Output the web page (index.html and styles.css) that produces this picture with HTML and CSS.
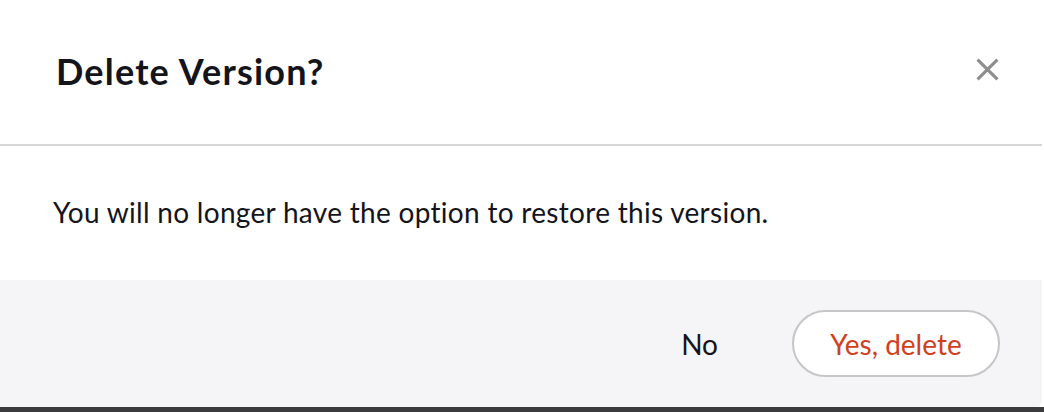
FILE: index.html
```html
<!DOCTYPE html>
<html lang="en">
<head>
    <meta charset="UTF-8">
    <meta name="viewport" content="width=device-width, initial-scale=1.0">
    <title>Delete Version</title>
    <link rel="stylesheet" href="styles.css">
</head>
<body>

<div class="page">
    <div class="modal">
        <header class="modal-header">
            <h1>Delete Version?</h1>
            <button class="close-btn" aria-label="Close">
                <svg width="22" height="22" viewBox="0 0 22 22">
                    <path d="M1.5 1.5 L20.5 20.5 M20.5 1.5 L1.5 20.5" stroke="#8e8e8e" stroke-width="3" fill="none"/>
                </svg>
            </button>
        </header>

        <div class="modal-body">
            <p>You will no longer have the option to restore this version.</p>
        </div>

        <footer class="modal-footer">
            <button class="btn-no">No</button>
            <button class="btn-delete">Yes, delete</button>
        </footer>
    </div>
    <div class="backdrop"></div>
</div>

</body>
</html>
```

FILE: styles.css
```css
body {
    font-family: Lato, "Noto Sans", sans-serif;
    margin: 0;
    padding: 0;
    background-color: #fff;
    color: #14141b;
}
.page {
    display: flex;
    flex-direction: column;
    height: 412px;
}
.modal {
    width: 1042px;
    background-color: #fff;
    border-bottom-right-radius: 6px;
    overflow: hidden;
}
.modal-header {
    height: 144px;
    border-bottom: 2px solid #d6d6d6;
    display: flex;
    align-items: center;
    justify-content: space-between;
    padding: 0 43px 0 56px;
}
.modal-header h1 {
    margin: 0 0 2px 0;
    font-size: 36px;
    font-weight: 700;
    letter-spacing: 1.2px;
}
.close-btn {
    background: none;
    border: none;
    padding: 0;
    width: 23px;
    height: 23px;
    margin-bottom: 6px;
    cursor: pointer;
}
.close-btn svg {
    display: block;
    width: 23px;
    height: 23px;
}
.modal-body {
    height: 134px;
    display: flex;
    align-items: center;
    padding-left: 53px;
}
.modal-body p {
    margin: 0 0 2px 0;
    font-size: 28px;
    letter-spacing: 0.3px;
}
.modal-footer {
    height: 127px;
    background-color: #f5f5f7;
    display: flex;
    align-items: center;
    justify-content: flex-end;
    gap: 74px;
    padding-right: 42px;
}
.modal-footer button {
    font-family: inherit;
    font-size: 28px;
    cursor: pointer;
}
.btn-no {
    background: none;
    border: none;
    color: #14141b;
    padding: 0;
}
.btn-delete {
    width: 208px;
    height: 67px;
    border: 2px solid #c6c6c8;
    border-radius: 34px;
    background-color: #fff;
    color: #d0401e;
}
.backdrop {
    flex: 1;
    background-color: #3b3b3d;
}
```
